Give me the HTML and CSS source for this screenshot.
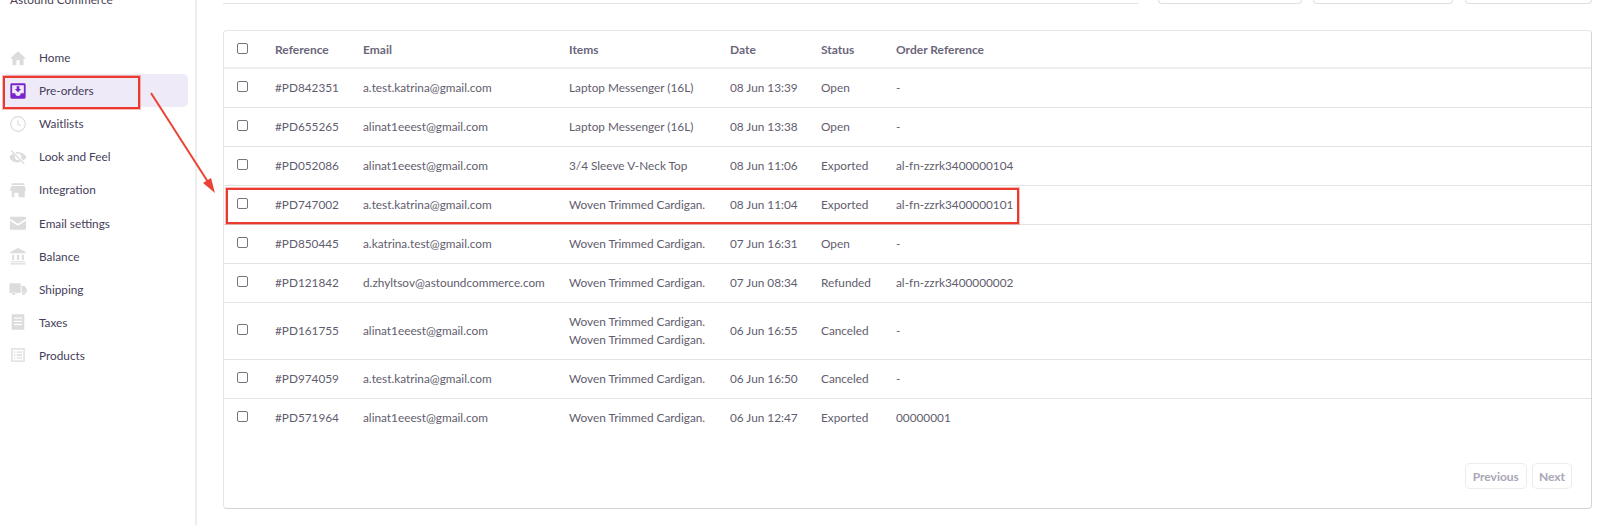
FILE: index.html
```html
<!DOCTYPE html>
<html lang="en">
<head>
<meta charset="utf-8">
<title>Pre-orders</title>
<link rel="stylesheet" href="styles.css">
</head>
<body>
<div class="app">
  <aside class="sidebar">
    <div class="brand">Astound Commerce</div>
    <nav class="nav">
      <a class="nav-item"><svg class="ico" viewBox="0 0 20 20"><path d="M10 2.500 1 10.500h2.800V18h4.400v-5.500h3.600V18h4.400v-7.500H19z"/></svg>Home</a>
      <a class="nav-item active"><svg class="ico" viewBox="0 0 20 20"><path fill-rule="evenodd" d="M3 1.500h14A1.500 1.500 0 0 1 18.500 3v14a1.500 1.500 0 0 1-1.500 1.500H3A1.500 1.500 0 0 1 1.500 17V3A1.500 1.500 0 0 1 3 1.500zM3.500 3.500v9h3.500a3 3 0 0 0 6 0h3.500v-9z"/><path d="M8.500 4.800h3v3h2L10 11.500 6.500 7.800h2z"/></svg>Pre-orders</a>
      <a class="nav-item"><svg class="ico" viewBox="0 0 20 20"><path fill-rule="evenodd" d="M10 1.200a8.800 8.800 0 1 1 0 17.600 8.800 8.800 0 0 1 0-17.600zm0 1.300a7.500 7.500 0 1 0 0 15 7.500 7.500 0 0 0 0-15z"/><path d="M9.400 5.500h1.200v4.300l3 1.800-.6 1-3.600-2.100z"/></svg>Waitlists</a>
      <a class="nav-item"><svg class="ico" viewBox="0 0 20 20"><path d="M10 4.500c4.200 0 7.500 2.500 9.500 5.500-.8 1.500-2 2.800-3.600 3.800l-2.500-2.400a3.600 3.600 0 0 0-4.800-4.800L6.800 5c1-.3 2.100-.5 3.200-.5zM.5 10c.8-1.500 2-2.700 3.500-3.700l2.700 2.600a3.600 3.600 0 0 0 4.400 4.400l2 2c-1.200.5-2.600.7-4.100.7-4.200 0-7.500-2.600-8.500-6z"/><path d="M3 2.500 17.500 17l-1 1L2 3.500z"/></svg>Look and Feel</a>
      <a class="nav-item"><svg class="ico" viewBox="0 0 20 20"><path d="M3 2.500h14v2H3zM2.500 5.500h15l1 4v1.500h-1v7h-7v-5H6v5H3v-7H1.500V9.500z"/></svg>Integration</a>
      <a class="nav-item"><svg class="ico" viewBox="0 0 20 20"><path d="M2.500 3h15A1.500 1.500 0 0 1 19 4.500v.7l-9 5.600-9-5.600v-.7A1.500 1.500 0 0 1 2.500 3zM1 7.400l9 5.600 9-5.600V16a1.500 1.500 0 0 1-1.500 1.500h-15A1.500 1.500 0 0 1 1 16z"/></svg>Email settings</a>
      <a class="nav-item"><svg class="ico" viewBox="0 0 20 20"><path d="M10 1 18.500 5.500V7h-17V5.500zM3.500 8.500h2.200v6H3.500zM8.900 8.500h2.200v6H8.900zM14.300 8.500h2.200v6h-2.200zM2 15.800h16V17H2zM1.500 18h17v1.500h-17z"/></svg>Balance</a>
      <a class="nav-item"><svg class="ico" viewBox="0 0 20 20"><path d="M.5 3.500h12.500v11H7.500a2.500 2.500 0 0 0-4.500 0H.5zM14 6.500h3l2.800 3.500v4.500h-1.300a2.500 2.500 0 0 0-4.500 0z"/><circle cx="5.200" cy="15" r="1.800"/><circle cx="16.300" cy="15" r="1.800"/></svg>Shipping</a>
      <a class="nav-item"><svg class="ico" viewBox="0 0 20 20"><path fill-rule="evenodd" d="M3 1.500h14v17H3zM5.500 5v1.500h9V5zm0 3.500V10h9V8.500zm0 3.500v1.500h9V12z"/></svg>Taxes</a>
      <a class="nav-item"><svg class="ico" viewBox="0 0 20 20"><path fill-rule="evenodd" d="M2.500 2.500h15v15h-15zM4 4v12h12V4zM5.500 6h1.500v1.500H5.500zM8.500 6h6v1.500h-6zM5.500 9.250h1.500v1.500H5.500zM8.500 9.250h6v1.500h-6zM5.500 12.500h1.500V14H5.500zM8.500 12.500h6V14h-6z"/></svg>Products</a>
    </nav>
  </aside>
  <main class="main">
    <div class="toolbar">
      <div class="search"></div>
      <div class="tool-btn tool-a"></div>
      <div class="tool-btn tool-b"></div>
      <div class="tool-btn tool-c"></div>
    </div>
    <section class="card">
      <table class="orders">
        <colgroup>
          <col class="c-check"><col class="c-ref"><col class="c-email"><col class="c-items"><col class="c-date"><col class="c-status"><col>
        </colgroup>
        <thead>
          <tr><th><span class="box"></span></th><th>Reference</th><th>Email</th><th>Items</th><th>Date</th><th>Status</th><th>Order Reference</th></tr>
        </thead>
        <tbody>
          <tr><td><span class="box"></span></td><td>#PD842351</td><td>a.test.katrina@gmail.com</td><td>Laptop Messenger (16L)</td><td>08 Jun 13:39</td><td>Open</td><td>-</td></tr>
          <tr><td><span class="box"></span></td><td>#PD655265</td><td>alinat1eeest@gmail.com</td><td>Laptop Messenger (16L)</td><td>08 Jun 13:38</td><td>Open</td><td>-</td></tr>
          <tr><td><span class="box"></span></td><td>#PD052086</td><td>alinat1eeest@gmail.com</td><td>3/4 Sleeve V-Neck Top</td><td>08 Jun 11:06</td><td>Exported</td><td>al-fn-zzrk3400000104</td></tr>
          <tr><td><span class="box"></span></td><td>#PD747002</td><td>a.test.katrina@gmail.com</td><td>Woven Trimmed Cardigan.</td><td>08 Jun 11:04</td><td>Exported</td><td>al-fn-zzrk3400000101</td></tr>
          <tr><td><span class="box"></span></td><td>#PD850445</td><td>a.katrina.test@gmail.com</td><td>Woven Trimmed Cardigan.</td><td>07 Jun 16:31</td><td>Open</td><td>-</td></tr>
          <tr><td><span class="box"></span></td><td>#PD121842</td><td>d.zhyltsov@astoundcommerce.com</td><td>Woven Trimmed Cardigan.</td><td>07 Jun 08:34</td><td>Refunded</td><td>al-fn-zzrk3400000002</td></tr>
          <tr><td><span class="box"></span></td><td>#PD161755</td><td>alinat1eeest@gmail.com</td><td>Woven Trimmed Cardigan.<br>Woven Trimmed Cardigan.</td><td>06 Jun 16:55</td><td>Canceled</td><td>-</td></tr>
          <tr><td><span class="box"></span></td><td>#PD974059</td><td>a.test.katrina@gmail.com</td><td>Woven Trimmed Cardigan.</td><td>06 Jun 16:50</td><td>Canceled</td><td>-</td></tr>
          <tr><td><span class="box"></span></td><td>#PD571964</td><td>alinat1eeest@gmail.com</td><td>Woven Trimmed Cardigan.</td><td>06 Jun 12:47</td><td>Exported</td><td>00000001</td></tr>
        </tbody>
      </table>
      <div class="pager">
        <button class="page-btn">Previous</button>
        <button class="page-btn page-next">Next</button>
      </div>
    </section>
  </main>
</div>
<div class="mark mark-nav"></div>
<div class="mark mark-row"></div>
<svg class="arrow" width="90" height="120" viewBox="0 0 90 120">
  <path d="M1 1 L58 90" fill="none" stroke="#ea4335" stroke-width="2"/>
  <path d="M65 101 L53 91 L61 86 Z" fill="#ea4335"/>
</svg>
</body>
</html>
```
FILE: styles.css
```css
* { box-sizing: border-box; }
html, body { margin: 0; padding: 0; height: 525px; overflow: hidden; background: #fff; }
body {
  font-family: "Lato", "Liberation Sans", sans-serif;
  font-size: 11.800px;
  color: #4a4458;
  position: relative;
}
.app { display: flex; height: 525px; }
.sidebar { width: 197px; flex: none; border-right: 2px solid #eeeeee; padding: 0 7px 0 3px; }
.brand { margin: -9px 0 0 7px; height: 18px; line-height: 18px; color: #4a4458; }
.nav { margin-top: 32px; display: flex; flex-direction: column; }
.nav-item {
  display: flex; align-items: center; height: 33.100px;
  padding-left: 5.500px; gap: 12.500px; border-radius: 5px; color: #45405a;
}
.nav-item.active { background: #efeaf8; }
.ico { width: 18px; height: 18px; flex: none; fill: #dcdcdc; }
.active .ico { fill: #7a25c9; }
.main { flex: 1; min-width: 0; padding: 0 6px 0 26px; display: flex; flex-direction: column; }
.toolbar { display: flex; height: 4px; margin-bottom: 26px; }
.search { flex: none; width: 915px; border-bottom: 1px solid #e3e3e3; }
.tool-btn { flex: none; border: 1px solid #dfdfdf; border-top: 0; border-radius: 0 0 4px 4px; }
.tool-a { width: 144px; margin-left: 20px; }
.tool-b { width: 140px; margin-left: 11px; }
.tool-c { width: 127px; margin-left: 12px; }
.card {
  width: 1369px; height: 479px; border: 1px solid #e6e6e6; border-right-color: #d4d4d4; border-bottom-color: #d4d4d4;
  border-radius: 4px; display: flex; flex-direction: column; justify-content: space-between;
}
.orders { width: 100%; table-layout: fixed; border-collapse: collapse; color: #625d6e; }
.c-check { width: 51px; }
.c-ref { width: 88px; }
.c-email { width: 206px; }
.c-items { width: 161px; }
.c-date { width: 91px; }
.c-status { width: 75px; }
.orders th { text-align: left; font-weight: 700; color: #6b667a; height: 37px; padding: 0; border-bottom: 2px solid #eeeeee; font-size: 12px; }
.orders td { height: 39px; padding: 0; border-bottom: 1px solid #e3e3e3; line-height: 18px; }
.orders tbody tr:last-child td { border-bottom: 0; }
.orders tbody tr:nth-child(7) td { height: 57px; }
.box {
  display: block; width: 11px; height: 11px; margin: -2px 0 0 13px;
  border: 1px solid #77737f; border-radius: 2px; background: #fff;
}
.pager { display: flex; justify-content: flex-end; gap: 5px; padding: 0 19px 19px 0; }
.page-btn {
  height: 26px; padding: 0 7px; font: 700 12px "Lato", "Liberation Sans", sans-serif; color: #a9a6b5;
  background: #fff; border: 1px solid #ececec; border-radius: 5px;
}
.page-next { padding: 0 6px; }
.mark { position: absolute; border: 2px solid #ea3a30; box-shadow: 0 0 0 1px rgba(234, 58, 48, .35); }
.mark-nav { left: 3px; top: 76px; width: 137px; height: 33px; }
.mark-row { left: 226px; top: 188px; width: 793px; height: 36px; }
.arrow { position: absolute; left: 150px; top: 92px; }
```
